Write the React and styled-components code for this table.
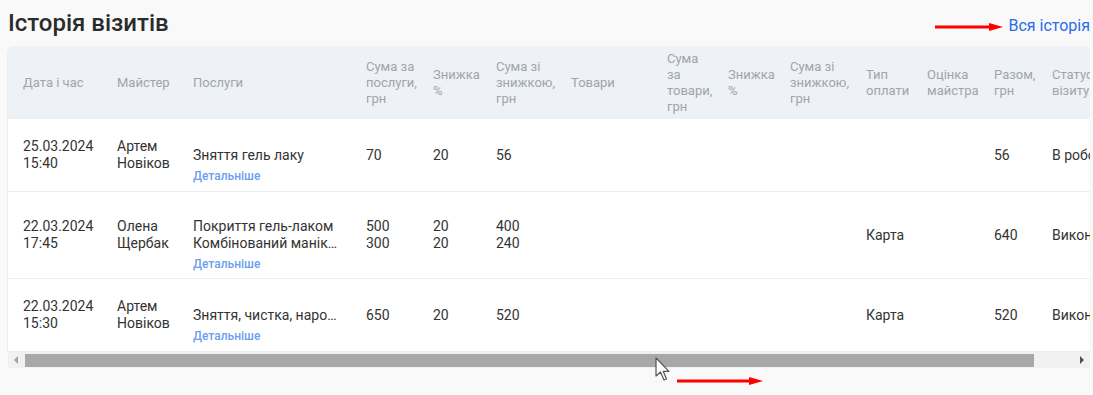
import styled, { createGlobalStyle } from "styled-components";

const GlobalStyle = createGlobalStyle`
    body {
        margin: 0;
        background: #f9f9f9;
        font-family: Roboto, "Noto Sans", "Liberation Sans", sans-serif;
    }
`;

const Page = styled.div`
    position: relative;
    padding: 10px 3px 0 8px;
    height: 395px;
    box-sizing: border-box;
    overflow: hidden;
`;

const TopBar = styled.div`
    display: flex;
    justify-content: space-between;
    align-items: baseline;
    height: 26px;
    margin-bottom: 10px;
`;

const Title = styled.h2`
    margin: 0;
    font-size: 24px;
    line-height: 26px;
    font-weight: 500;
    color: #2b2b2b;
`;

const AllLink = styled.a`
    font-size: 16px;
    line-height: 20px;
    color: #2a6ce8;
    text-decoration: none;
    cursor: pointer;
`;

const Card = styled.div`
    background: #fff;
    box-shadow: -1px 0 0 #eceff2;
    border-radius: 6px 6px 0 0;
    overflow: hidden;
`;

const Table = styled.table`
    border-collapse: collapse;
    table-layout: fixed;
    width: ${(p) => p.$width}px;
`;

const Th = styled.th`
    background: #eef1f5;
    color: #a0a5ad;
    font-size: 13px;
    line-height: 16px;
    font-weight: 400;
    text-align: left;
    vertical-align: middle;
    white-space: nowrap;
    padding: 4.5px 8px;
    padding-left: ${(p) => (p.$first ? 15 : 8)}px;
`;

const Td = styled.td`
    font-size: 14px;
    line-height: 17px;
    color: #333;
    vertical-align: middle;
    white-space: nowrap;
    overflow: hidden;
    padding: ${(p) => (p.$wide ? 26 : 19)}px 8px;
    padding-left: ${(p) => (p.$first ? 15 : 8)}px;
    border-bottom: 1px solid #eceff2;
`;

const Lines = styled.div`
    position: relative;
    & > span {
        display: block;
    }
`;

const More = styled.a`
    position: absolute;
    left: 0;
    top: calc(100% + 5px);
    font-size: 12px;
    line-height: 15px;
    font-weight: 500;
    color: #6d9fee;
    cursor: pointer;
`;

const ScrollBar = styled.div`
    display: flex;
    height: 16px;
    background: #f1f1f1;
`;

const ScrollButton = styled.div`
    width: 16px;
    flex: none;
    display: flex;
    align-items: center;
    justify-content: center;
    &::before {
        content: "";
        border-top: 4px solid transparent;
        border-bottom: 4px solid transparent;
        ${(p) =>
            p.$dir === "left"
                ? `border-right: 4px solid ${p.$disabled ? "#a3a3a3" : "#505050"};`
                : `border-left: 4px solid ${p.$disabled ? "#a3a3a3" : "#505050"};`}
    }
`;

const Track = styled.div`
    flex: 1;
    padding: 2px 0 1px 1px;
`;

const Thumb = styled.div`
    height: 13px;
    background: #a8a8a8;
`;

const Overlay = styled.div`
    position: absolute;
    left: ${(p) => p.$x}px;
    top: ${(p) => p.$y}px;
    pointer-events: none;
    line-height: 0;
`;

const columns = [
    { key: "date", title: ["Дата і час"], width: 101 },
    { key: "master", title: ["Майстер"], width: 76 },
    { key: "services", title: ["Послуги"], width: 173 },
    { key: "sum", title: ["Сума за", "послуги,", "грн"], width: 67 },
    { key: "disc", title: ["Знижка", "%"], width: 63 },
    { key: "sumDisc", title: ["Сума зі", "знижкою,", "грн"], width: 75 },
    { key: "goods", title: ["Товари"], width: 96 },
    { key: "goodsSum", title: ["Сума", "за", "товари,", "грн"], width: 61 },
    { key: "goodsDisc", title: ["Знижка", "%"], width: 62 },
    { key: "goodsSumDisc", title: ["Сума зі", "знижкою,", "грн"], width: 76 },
    { key: "pay", title: ["Тип", "оплати"], width: 61 },
    { key: "rating", title: ["Оцінка", "майстра"], width: 67 },
    { key: "total", title: ["Разом,", "грн"], width: 58 },
    { key: "status", title: ["Статус", "візиту"], width: 90 },
];

const visits = [
    {
        date: ["25.03.2024", "15:40"],
        master: ["Артем", "Новіков"],
        services: ["Зняття гель лаку"],
        sum: ["70"],
        disc: ["20"],
        sumDisc: ["56"],
        pay: [],
        total: ["56"],
        status: ["В роботі"],
    },
    {
        date: ["22.03.2024", "17:45"],
        master: ["Олена", "Щербак"],
        services: ["Покриття гель-лаком", "Комбінований манік…"],
        sum: ["500", "300"],
        disc: ["20", "20"],
        sumDisc: ["400", "240"],
        pay: ["Карта"],
        total: ["640"],
        status: ["Виконано"],
    },
    {
        date: ["22.03.2024", "15:30"],
        master: ["Артем", "Новіков"],
        services: ["Зняття, чистка, наро…"],
        sum: ["650"],
        disc: ["20"],
        sumDisc: ["520"],
        pay: ["Карта"],
        total: ["520"],
        status: ["Виконано"],
    },
];

const tableWidth = columns.reduce((s, c) => s + c.width, 0);
const visibleWidth = 1082;
const trackWidth = visibleWidth - 32;

const Arrow = ({ length }) => (
    <svg width={length} height="10" viewBox={`0 0 ${length} 10`}>
        <rect x="0" y="3.5" width={length - 10} height="3" fill="#f00" />
        <polygon points={`${length - 14},1 ${length},5 ${length - 14},9`} fill="#f00" />
    </svg>
);

const Cursor = () => (
    <svg width="16" height="26" viewBox="0 0 16 26">
        <path
            d="M1 1 L1 19 L5.5 15 L9 23 L11.5 22 L8.2 14.3 L14 14.3 Z"
            fill="#fff"
            stroke="#555"
            strokeWidth="1.2"
            strokeLinejoin="round"
        />
    </svg>
);

const App = () => {
    return (
        <Page>
            <GlobalStyle />
            <TopBar>
                <Title>Історія візитів</Title>
                <AllLink>Вся історія</AllLink>
            </TopBar>
            <Card>
                <Table $width={tableWidth}>
                    <colgroup>
                        {columns.map((c) => (
                            <col key={c.key} style={{ width: c.width }} />
                        ))}
                    </colgroup>
                    <thead>
                        <tr>
                            {columns.map((c, i) => (
                                <Th key={c.key} $first={i === 0}>
                                    {c.title.map((t, j) => (
                                        <span key={j}>
                                            {j > 0 && <br />}
                                            {t}
                                        </span>
                                    ))}
                                </Th>
                            ))}
                        </tr>
                    </thead>
                    <tbody>
                        {visits.map((v, r) => (
                            <tr key={r}>
                                {columns.map((c, i) => (
                                    <Td key={c.key} $first={i === 0} $wide={c.key === "services"}>
                                        <Lines>
                                            {(v[c.key] || []).map((t, j) => (
                                                <span key={j}>{t}</span>
                                            ))}
                                            {c.key === "services" && <More>Детальніше</More>}
                                        </Lines>
                                    </Td>
                                ))}
                            </tr>
                        ))}
                    </tbody>
                </Table>
            </Card>
            <ScrollBar>
                <ScrollButton $dir="left" $disabled />
                <Track>
                    <Thumb style={{ width: Math.round((trackWidth * visibleWidth) / tableWidth) }} />
                </Track>
                <ScrollButton $dir="right" />
            </ScrollBar>

            <Overlay $x={935} $y={22}>
                <Arrow length={68} />
            </Overlay>
            <Overlay $x={677} $y={376}>
                <Arrow length={86} />
            </Overlay>
            <Overlay $x={655} $y={357}>
                <Cursor />
            </Overlay>
        </Page>
    );
};

export default App;
